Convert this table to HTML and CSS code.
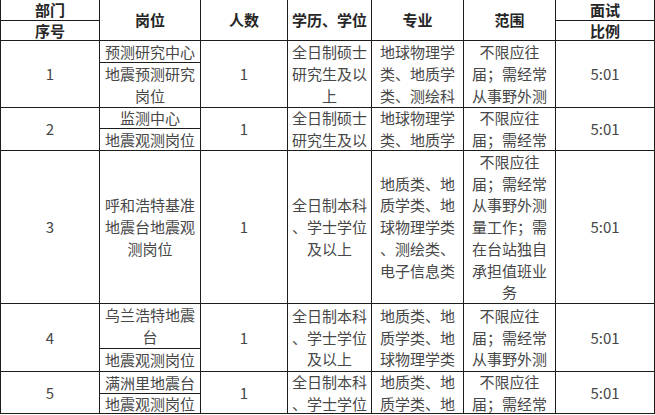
FILE: index.html
```html
<!DOCTYPE html>
<html lang="zh-CN">
<head>
<meta charset="utf-8">
<title>岗位表</title>
<link rel="stylesheet" href="styles.css">
</head>
<body>
<div class="sheet">
  <!-- header -->
  <div class="cell head c1 r1">部门</div>
  <div class="cell head c1 r2">序号</div>
  <div class="cell head c2 rh">岗位</div>
  <div class="cell head c3 rh">人数</div>
  <div class="cell head c4 rh">学历、学位</div>
  <div class="cell head c5 rh">专业</div>
  <div class="cell head c6 rh">范围</div>
  <div class="cell head c7 r1">面试</div>
  <div class="cell head c7 r2">比例</div>

  <!-- row 1 -->
  <div class="cell c1 ra">1</div>
  <div class="cell c2 r3">预测研究中心</div>
  <div class="cell c2 r4">地震预测研究<br>岗位</div>
  <div class="cell c3 ra">1</div>
  <div class="cell c4 ra">全日制硕士<br>研究生及以<br>上</div>
  <div class="cell c5 ra">地球物理学<br>类、地质学<br>类、测绘科</div>
  <div class="cell c6 ra">不限应往<br>届；需经常<br>从事野外测</div>
  <div class="cell c7 ra">5:01</div>

  <!-- row 2 -->
  <div class="cell c1 rb">2</div>
  <div class="cell c2 r5">监测中心</div>
  <div class="cell c2 r6">地震观测岗位</div>
  <div class="cell c3 rb">1</div>
  <div class="cell c4 rb">全日制硕士<br>研究生及以</div>
  <div class="cell c5 rb">地球物理学<br>类、地质学</div>
  <div class="cell c6 rb">不限应往<br>届；需经常</div>
  <div class="cell c7 rb">5:01</div>

  <!-- row 3 -->
  <div class="cell c1 r7">3</div>
  <div class="cell c2 r7">呼和浩特基准<br>地震台地震观<br>测岗位</div>
  <div class="cell c3 r7">1</div>
  <div class="cell c4 r7">全日制本科<br>、学士学位<br>及以上</div>
  <div class="cell c5 r7">地质类、地<br>质学类、地<br>球物理学类<br>、测绘类、<br>电子信息类</div>
  <div class="cell c6 r7">不限应往<br>届；需经常<br>从事野外测<br>量工作；需<br>在台站独自<br>承担值班业<br>务</div>
  <div class="cell c7 r7">5:01</div>

  <!-- row 4 -->
  <div class="cell c1 rc">4</div>
  <div class="cell c2 r8">乌兰浩特地震<br>台</div>
  <div class="cell c2 r9">地震观测岗位</div>
  <div class="cell c3 rc">1</div>
  <div class="cell c4 rc">全日制本科<br>、学士学位<br>及以上</div>
  <div class="cell c5 rc">地质类、地<br>质学类、地<br>球物理学类</div>
  <div class="cell c6 rc">不限应往<br>届；需经常<br>从事野外测</div>
  <div class="cell c7 rc">5:01</div>

  <!-- row 5 -->
  <div class="cell c1 rd">5</div>
  <div class="cell c2 r10">满洲里地震台</div>
  <div class="cell c2 r11">地震观测岗位</div>
  <div class="cell c3 rd">1</div>
  <div class="cell c4 rd">全日制本科<br>、学士学位</div>
  <div class="cell c5 rd">地质类、地<br>质学类、地</div>
  <div class="cell c6 rd">不限应往<br>届；需经常</div>
  <div class="cell c7 rd">5:01</div>
</div>
</body>
</html>
```

FILE: styles.css
```css
html, body {
  margin: 0;
  padding: 0;
  background: #ffffff;
}

.sheet {
  display: grid;
  grid-template-columns: 98px 100px 86px 83px 91px 91px 98px;
  grid-template-rows: 20px 19px 21px 44px 20px 21px 152px 44px 22px 21px 19px;
  gap: 1px;
  padding: 0 1px 1px 1px;
  width: 655px;
  box-sizing: border-box;
  background: #1c1c1c;
  font-family: "Noto Sans CJK SC", "Noto Sans", sans-serif;
  font-size: 15px;
  line-height: 21.7px;
  color: #474747;
}

.cell {
  background: #ffffff;
  display: flex;
  align-items: center;
  justify-content: center;
  text-align: center;
  overflow: hidden;
  white-space: nowrap;
}

.head {
  font-weight: bold;
  color: #262626;
}

/* columns */
.c1 { grid-column: 1; }
.c2 { grid-column: 2; }
.c3 { grid-column: 3; }
.c4 { grid-column: 4; }
.c5 { grid-column: 5; }
.c6 { grid-column: 6; }
.c7 { grid-column: 7; }

/* single grid rows */
.r1 { grid-row: 1; }
.r2 { grid-row: 2; }
.r3 { grid-row: 3; }
.r4 { grid-row: 4; }
.r5 { grid-row: 5; }
.r6 { grid-row: 6; }
.r7 { grid-row: 7; }
.r8 { grid-row: 8; }
.r9 { grid-row: 9; }
.r10 { grid-row: 10; }
.r11 { grid-row: 11; }

/* spanning rows */
.rh { grid-row: 1 / 3; }
.ra { grid-row: 3 / 5; }
.rb { grid-row: 5 / 7; }
.rc { grid-row: 8 / 10; }
.rd { grid-row: 10 / 12; }
```
